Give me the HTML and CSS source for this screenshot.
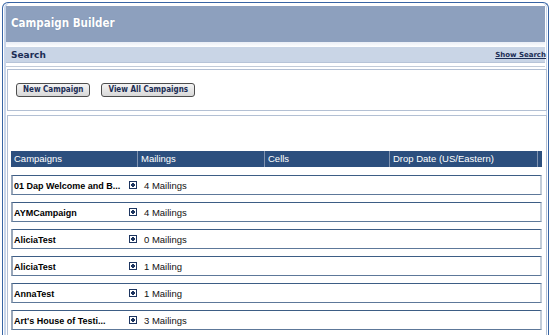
FILE: index.html
```html
<!DOCTYPE html>
<html lang="en">
<head>
  <meta charset="UTF-8" />
  <title>Campaign Builder</title>
  <link rel="stylesheet" href="styles.css">
</head>
<body>
  <div class="frame">
    <div class="title">Campaign Builder</div>
    <div class="search-wrap">
      <div class="search-bar">
        <span>Search</span>
        <a href="#">Show Search</a>
      </div>
    </div>

    <div class="panel actions">
      <button class="btn">New Campaign</button>
      <button class="btn">View All Campaigns</button>
    </div>

    <div class="panel list">
      <div class="grid-head">
        <div>Campaigns</div>
        <div>Mailings</div>
        <div>Cells</div>
        <div>Drop Date (US/Eastern)</div>
        <div></div>
      </div>

      <div class="row">
        <span class="name">01 Dap Welcome and B...</span>
        <span class="plus"></span>
        <span class="count">4 Mailings</span>
      </div>
      <div class="row">
        <span class="name">AYMCampaign</span>
        <span class="plus"></span>
        <span class="count">4 Mailings</span>
      </div>
      <div class="row">
        <span class="name">AliciaTest</span>
        <span class="plus"></span>
        <span class="count">0 Mailings</span>
      </div>
      <div class="row">
        <span class="name">AliciaTest</span>
        <span class="plus"></span>
        <span class="count">1 Mailing</span>
      </div>
      <div class="row">
        <span class="name">AnnaTest</span>
        <span class="plus"></span>
        <span class="count">1 Mailing</span>
      </div>
      <div class="row">
        <span class="name">Art's House of Testi...</span>
        <span class="plus"></span>
        <span class="count">3 Mailings</span>
      </div>
    </div>
  </div>
</body>
</html>
```

FILE: styles.css
```css
body {
  margin: 0;
  background-color: #ffffff;
  font-family: "Liberation Sans", Arial, sans-serif;
  overflow: hidden;
}
.frame {
  margin: 2px 0 0 2px;
  width: 540px;
  height: 330px;
  padding: 3px 1px 0 4px;
  border: 1px solid #3764a4;
  border-bottom: none;
  border-radius: 6px 6px 0 0;
  box-shadow: inset 1px 0 #ffffff, inset 3px 0 #c9d6ea, inset -1px 0 #ffffff, inset -2px 0 #c9d6ea;
  overflow: hidden;
}
.title {
  margin: 0 2px 0 -1px;
  height: 36px;
  line-height: 35px;
  padding-left: 5px;
  background-color: #8da0be;
  color: #ffffff;
  font-family: "DejaVu Sans Condensed", "DejaVu Sans", Verdana, sans-serif;
  font-stretch: condensed;
  font-weight: bold;
  font-size: 11.5px;
  text-shadow: 0 0 1px #6f82a0;
}
.search-wrap {
  margin: 0 2px 0 -1px;
  padding-top: 5px;
  background: linear-gradient(#e9eef6, #ffffff 5px);
  border-bottom: 1px solid #c3ccd9;
  padding-bottom: 3px;
}
.search-bar {
  height: 15px;
  display: flex;
  align-items: center;
  justify-content: space-between;
  padding-left: 5px;
  background-color: #c9d5e6;
  border-bottom: 1px solid #b7c4d8;
  font-family: "DejaVu Sans", Verdana, sans-serif;
  font-weight: bold;
  font-size: 9px;
  color: #1b2d55;
}
.search-bar a {
  color: #1b2d55;
  font-size: 7px;
  margin-right: -1px;
}
.panel {
  border: 1px solid #b3c0d4;
  background-color: #ffffff;
}
.actions {
  margin-top: 2px;
  height: 27px;
  padding: 13px 0 0 8px;
  display: flex;
  gap: 11px;
  align-items: flex-start;
}
.btn {
  margin: 0;
  height: 14px;
  padding: 0 6px;
  border: 1px solid #4d4d4d;
  border-radius: 3px;
  background: linear-gradient(#f4f4f4, #d8d8d8);
  font-family: "DejaVu Sans Condensed", "DejaVu Sans", Verdana, sans-serif;
  font-stretch: condensed;
  font-weight: bold;
  font-size: 8px;
  line-height: 12px;
  color: #1b2d55;
  cursor: pointer;
}
.list {
  margin-top: 4px;
  padding: 35px 4px 0 3px;
  height: 300px;
  border-bottom: none;
}
.grid-head {
  display: grid;
  grid-template-columns: 127px 127px 125px 1fr 4px;
  height: 16px;
  background-color: #2c4f7e;
  color: #ffffff;
  font-size: 9.5px;
  line-height: 16px;
  margin-bottom: 8px;
}
.grid-head div {
  padding-left: 3px;
  border-right: 1px solid #8093b0;
}
.grid-head div:last-child {
  border-right: none;
}
.row {
  display: flex;
  align-items: center;
  height: 18px;
  margin-bottom: 7px;
  border-top: 1px solid #3d5d85;
  border-bottom: 1px solid #5d7899;
  border-left: 2px solid #98a6b9;
  border-right: 2px solid #c3cdd9;
  font-size: 9.5px;
  color: #000000;
  white-space: nowrap;
}
.name {
  width: 115px;
  padding: 1px 0 0 1px;
  font-size: 9px;
  font-weight: bold;
}
.plus {
  position: relative;
  flex: none;
  width: 6px;
  height: 6px;
  border: 1px solid #1d3560;
  background-color: #ffffff;
  margin-right: 7px;
}
.plus::before,
.plus::after {
  content: "";
  position: absolute;
  background-color: #1d3560;
}
.plus::before {
  left: 1px;
  top: 2px;
  width: 4px;
  height: 2px;
}
.plus::after {
  left: 2px;
  top: 1px;
  width: 2px;
  height: 4px;
}
.count {
  padding-top: 1px;
  color: #111111;
}
```
